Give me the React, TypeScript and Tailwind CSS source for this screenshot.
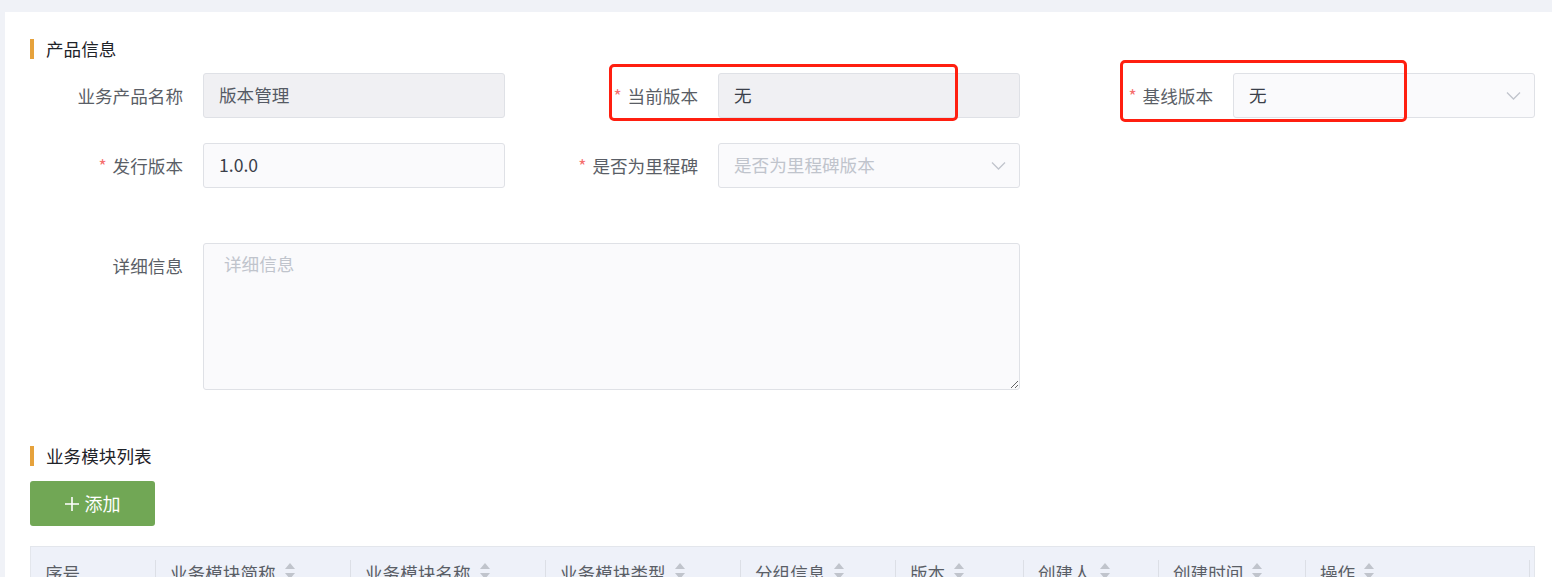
import React from "react";

const FONT = '"Noto Sans CJK SC", "Noto Sans", "Liberation Sans", sans-serif';

function Chevron() {
  return (
    <svg width="15" height="9" viewBox="0 0 15 9" className="absolute right-[13px] top-1/2 -translate-y-1/2">
      <polyline points="1,1 7.5,7.5 14,1" fill="none" stroke="#c0c4cc" strokeWidth="1.3" />
    </svg>
  );
}

function SortIcon() {
  return (
    <svg width="12" height="22" viewBox="0 0 12 22" className="ml-2 shrink-0">
      <polygon points="6,2 11,8 1,8" fill="#c0c4cc" />
      <polygon points="6,18 11,12 1,12" fill="#c0c4cc" />
    </svg>
  );
}

function Label({ text, required }: { text: string; required?: boolean }) {
  return (
    <div className="w-[193px] shrink-0 pr-5 text-right leading-[45px] text-[#5a5e66]">
      {required && <span className="mr-[6px] text-[#f56c6c]">*</span>}
      {text}
    </div>
  );
}

function SectionTitle({ text }: { text: string }) {
  return (
    <div className="flex h-5 items-center pl-[25px]">
      <div className="h-5 w-[4px] bg-[#e6a23c]" />
      <div className="ml-3 text-[17.6px] leading-5 text-[#1f2329]">{text}</div>
    </div>
  );
}

const cols = [
  { t: "序号", w: 124, sort: false },
  { t: "业务模块简称", w: 195, sort: true },
  { t: "业务模块名称", w: 195, sort: true },
  { t: "业务模块类型", w: 195, sort: true },
  { t: "分组信息", w: 155, sort: true },
  { t: "版本", w: 128, sort: true },
  { t: "创建人", w: 135, sort: true },
  { t: "创建时间", w: 147, sort: true },
  { t: "操作", w: 225, sort: true },
];

export default function App() {
  return (
    <div className="h-[577px] overflow-hidden bg-[#f0f2f7] pl-[5px] pt-3" style={{ fontFamily: FONT }}>
      <div className="relative h-[600px] bg-white text-[17.6px]">
        <div className="pt-[27px]">
          <SectionTitle text="产品信息" />
        </div>

        <div className="mt-[14px] grid grid-cols-[495px_495px_495px] gap-x-5 gap-y-[25px] pl-[5px]">
          <div className="flex">
            <Label text="业务产品名称" />
            <div className="flex h-[45px] w-[302px] items-center rounded-[3px] border border-[#dfe1e6] bg-[#f0f0f3] px-[15px] text-[#555a64]">
              版本管理
            </div>
          </div>
          <div className="flex">
            <Label text="当前版本" required />
            <div className="flex h-[45px] w-[302px] items-center rounded-[3px] border border-[#dfe1e6] bg-[#f0f0f3] px-[15px] text-[#3a3f4a]">
              无
            </div>
          </div>
          <div className="flex">
            <Label text="基线版本" required />
            <div className="relative flex h-[45px] w-[303px] items-center rounded-[3px] border border-[#dfe1e6] bg-[#fafafc] px-[15px] text-[#3a3f4a]">
              无
              <Chevron />
            </div>
          </div>

          <div className="flex">
            <Label text="发行版本" required />
            <div className="flex h-[45px] w-[302px] items-center rounded-[3px] border border-[#dfe1e6] bg-[#fafafc] px-[15px] text-[#3a3f4a]">
              1.0.0
            </div>
          </div>
          <div className="flex">
            <Label text="是否为里程碑" required />
            <div className="relative flex h-[45px] w-[302px] items-center rounded-[3px] border border-[#dfe1e6] bg-[#fafafc] px-[15px] text-[#c0c4cc]">
              是否为里程碑版本
              <Chevron />
            </div>
          </div>
          <div />

          <div className="col-span-2 mt-[30px] flex">
            <Label text="详细信息" />
            <textarea
              readOnly
              placeholder="详细信息"
              className="h-[147px] w-[817px] resize-y rounded-[3px] border border-[#dfe1e6] bg-[#fafafc] px-5 py-[6px] text-[17.6px] leading-[28px] text-[#3a3f4a] outline-none placeholder:text-[#c0c4cc]"
              style={{ fontFamily: FONT }}
            />
          </div>
        </div>

        <div className="mt-[56px]">
          <SectionTitle text="业务模块列表" />
        </div>

        <div className="mt-[15px] pl-[25px]">
          <button className="flex h-[45px] w-[125px] items-center justify-center gap-[6px] rounded-[3px] bg-[#71a755] text-[18px] text-white">
            <svg width="14" height="14" viewBox="0 0 14 14">
              <path d="M7 0V14M0 7H14" stroke="#fff" strokeWidth="1.6" />
            </svg>
            <span>添加</span>
          </button>
        </div>

        <div className="ml-[25px] mt-5 w-[1505px] border-l border-r border-t border-[#e3e6ec] bg-[#eef1f9]">
          <div className="flex pt-[13px]">
            {cols.map((c, i) => (
              <div
                key={c.t}
                className={`flex h-[40px] shrink-0 items-start pl-[14px] pt-px leading-[24px] text-[#5a5e66] ${i > 0 ? "border-l border-[#dcdfe6]" : ""} ${i === cols.length - 1 ? "border-r" : ""}`}
                style={{ width: c.w }}
              >
                <span>{c.t}</span>
                {c.sort && <SortIcon />}
              </div>
            ))}
          </div>
        </div>

        <div className="pointer-events-none absolute left-[604px] top-[52px] h-[57px] w-[349px] rounded-[5px] border-[3px] border-[#ff1f10]" />
        <div className="pointer-events-none absolute left-[1115px] top-[48px] h-[62px] w-[287px] rounded-[5px] border-[3px] border-[#ff1f10]" />
      </div>
    </div>
  );
}
